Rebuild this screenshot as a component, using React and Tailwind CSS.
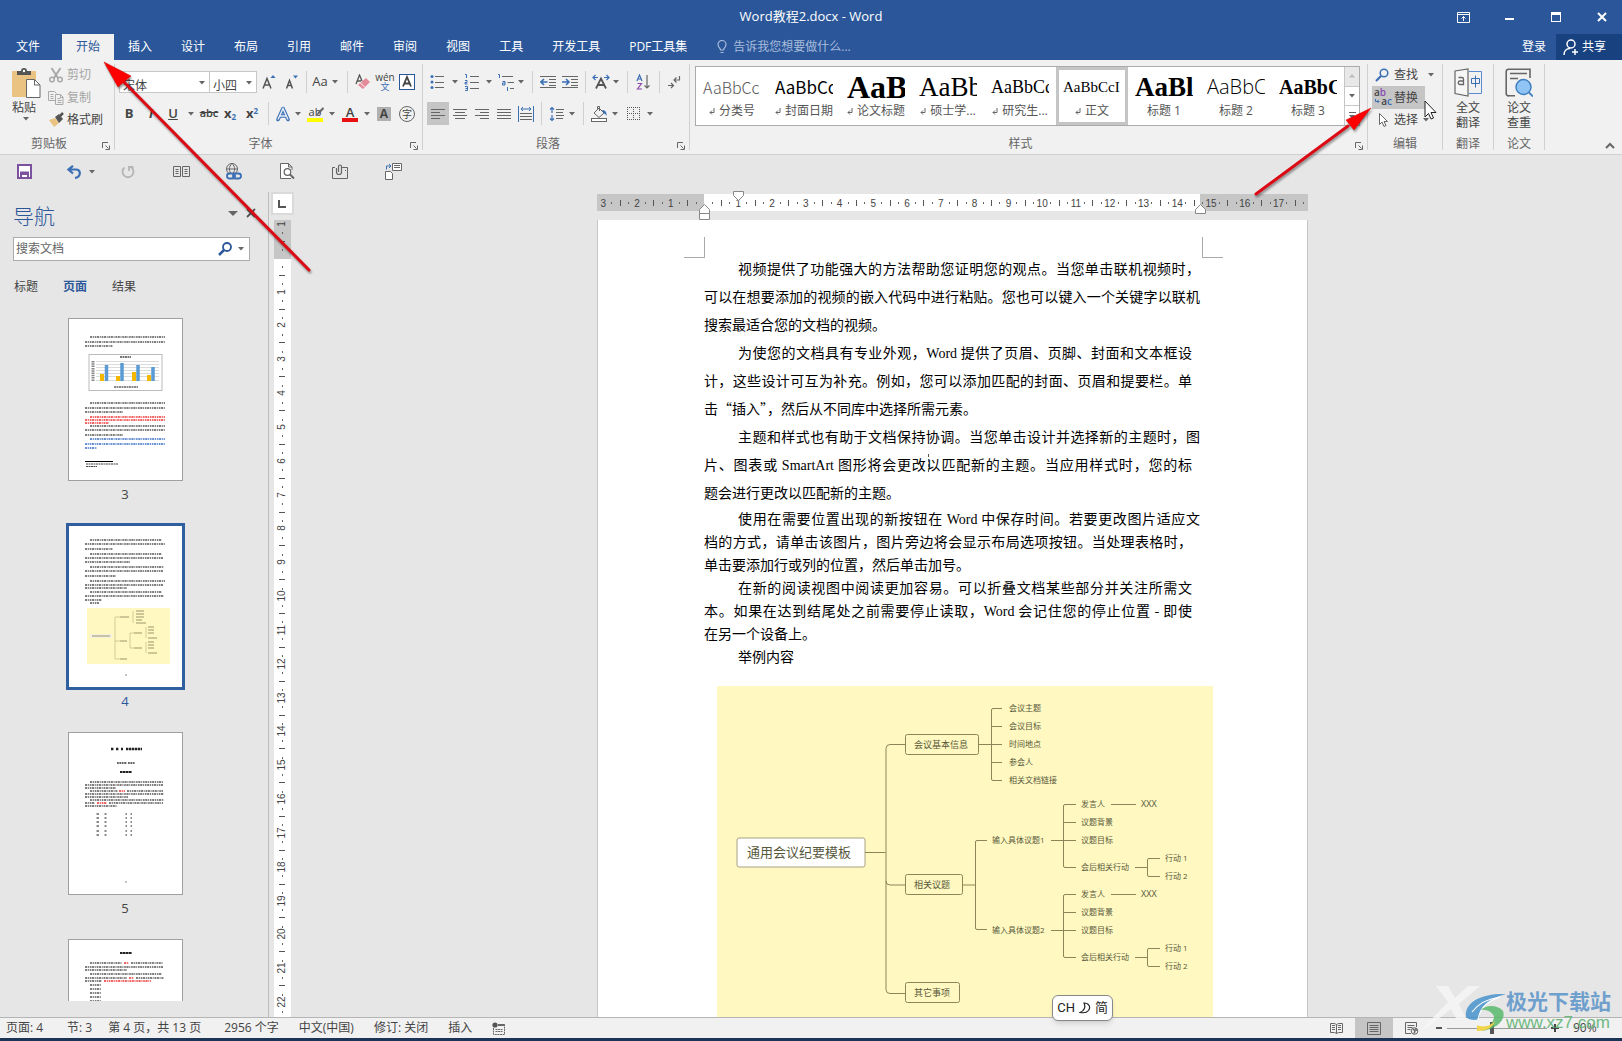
import React from "react";
import clsx from "clsx";

const tabs = [
  "插入",
  "设计",
  "布局",
  "引用",
  "邮件",
  "审阅",
  "视图",
  "工具",
  "开发工具",
  "PDF工具集",
];

const styles = [
  { sample: "AaBbCc", name: "分类号", mark: true, cls: "font-['Noto_Sans_CJK_SC'] font-light text-[16px] text-[#555]" },
  { sample: "AaBbCc", name: "封面日期", mark: true, cls: "font-['Noto_Sans_CJK_SC'] text-[17px] text-black" },
  { sample: "AaB", name: "论文标题", mark: true, cls: "font-['Liberation_Serif'] text-[32px] font-bold text-black" },
  { sample: "AaBb", name: "硕士学...", mark: true, cls: "font-['Liberation_Serif'] text-[27px] text-black" },
  { sample: "AaBbCc", name: "研究生...", mark: true, cls: "font-['Liberation_Serif'] text-[18px] text-black" },
  { sample: "AaBbCcI", name: "正文", mark: true, active: true, cls: "font-['Liberation_Serif'] text-[15px] text-black" },
  { sample: "AaBl", name: "标题 1", cls: "font-['Liberation_Serif'] text-[27px] font-bold text-black" },
  { sample: "AaBbC", name: "标题 2", cls: "font-['Open_Sans'] font-light text-[20px] text-black" },
  { sample: "AaBbC", name: "标题 3", cls: "font-['Liberation_Serif'] text-[20px] font-bold text-black" },
];

// kind: "full" and "short" are justified lines, "last" ends a paragraph
const looseLines = [
  { t: "视频提供了功能强大的方法帮助您证明您的观点。当您单击联机视频时，", kind: "full", first: true },
  { t: "可以在想要添加的视频的嵌入代码中进行粘贴。您也可以键入一个关键字以联机", kind: "full" },
  { t: "搜索最适合您的文档的视频。", kind: "last" },
  { t: "为使您的文档具有专业外观，Word 提供了页眉、页脚、封面和文本框设", kind: "short", first: true },
  { t: "计，这些设计可互为补充。例如，您可以添加匹配的封面、页眉和提要栏。单", kind: "short" },
  { t: "击“插入”，然后从不同库中选择所需元素。", kind: "last" },
  { t: "主题和样式也有助于文档保持协调。当您单击设计并选择新的主题时，图", kind: "full", first: true },
  { t: "片、图表或 SmartArt 图形将会更改以匹配新的主题。当应用样式时，您的标", kind: "short" },
  { t: "题会进行更改以匹配新的主题。", kind: "last" },
];

const tightLines = [
  { t: "使用在需要位置出现的新按钮在 Word 中保存时间。若要更改图片适应文", kind: "full", first: true },
  { t: "档的方式，请单击该图片，图片旁边将会显示布局选项按钮。当处理表格时，", kind: "short" },
  { t: "单击要添加行或列的位置，然后单击加号。", kind: "last" },
  { t: "在新的阅读视图中阅读更加容易。可以折叠文档某些部分并关注所需文", kind: "short", first: true },
  { t: "本。如果在达到结尾处之前需要停止读取，Word 会记住您的停止位置 - 即使", kind: "short" },
  { t: "在另一个设备上。", kind: "last" },
  { t: "举例内容", kind: "last", first: true },
];

const hRuler = [3, 2, 1, "", 1, 2, 3, 4, 5, 6, 7, 8, 9, 10, 11, 12, 13, 14, 15, 16, 17];
const vRuler = [1, "", 1, 2, 3, 4, 5, 6, 7, 8, 9, 10, 11, 12, 13, 14, 15, 16, 17, 18, 19, 20, 21, 22];

// page thumbnails: [x, y, width, color]
const K = "#555";
const R = "#e33";
const B = "#3a6fc4";

const thumb3 = [
  [22, 19, 75, K], [17, 24, 80, K], [17, 28, 28, K],
  [22, 85, 75, K], [17, 90, 80, K], [17, 94, 38, K],
  [22, 99, 75, R], [17, 102, 80, R], [17, 105, 24, R],
  [22, 108, 75, K], [17, 112, 80, K], [17, 117, 38, K],
  [22, 121, 75, B], [17, 126, 80, B], [17, 130, 12, B],
];
const thumb4 = [
  [22, 15, 72, K], [17, 19, 80, K], [17, 24, 28, K],
  [22, 29, 72, K], [17, 33, 78, K], [17, 37, 45, K],
  [22, 42, 74, K], [17, 46, 78, K], [17, 51, 31, K],
  [22, 56, 75, K], [17, 60, 78, K], [17, 63, 42, K],
  [22, 67, 72, K], [17, 71, 79, K], [17, 75, 17, K], [22, 78, 9, K],
];
const thumb5 = [
  [22, 50, 73, K], [17, 53, 78, K], [17, 56, 31, K],
  [22, 59, 28, K], [51, 59, 6, R], [59, 59, 36, K], [17, 62, 79, K], [17, 65, 43, K],
  [22, 68, 74, K], [17, 71, 10, K], [29, 71, 10, R], [41, 71, 54, K], [17, 74, 32, K],
];
const thumb6 = [
  [22, 24, 32, K], [56, 24, 5, R], [63, 24, 32, K], [17, 28, 78, K], [17, 31, 42, K],
  [22, 35, 72, K], [17, 39, 42, K], [61, 39, 5, R], [68, 39, 28, K],
  [17, 42, 17, K], [36, 42, 47, R],
  [22, 46, 11, K], [22, 50, 11, K], [22, 54, 11, K], [22, 58, 11, K], [22, 62, 11, K],
];

function Svg({ w, h, children, className }) {
  return (
    <svg
      width={w}
      height={h}
      viewBox={`0 0 ${w} ${h}`}
      fill="none"
      stroke="#666"
      className={clsx("shrink-0", className)}
      aria-hidden="true"
    >
      {children}
    </svg>
  );
}

function Tool({ label, className, children }) {
  return (
    <button aria-label={label} className={clsx("flex h-full shrink-0 items-center justify-center text-[#444]", className)}>
      {children}
    </button>
  );
}

function CaretIcon() {
  return (
    <Svg w={6} h={4}>
      <path d="M0 0h6L3 3.500z" fill="#666" stroke="none" />
    </Svg>
  );
}

function Caret({ className }) {
  return (
    <Tool label="更多选项" className={className}>
      <CaretIcon />
    </Tool>
  );
}

function Sep({ className }) {
  return (
    <div className={clsx("flex h-full shrink-0 justify-center", className)}>
      <div className="w-px bg-[#d0d0d0]" />
    </div>
  );
}

function Group({ title, className, launcher, children }) {
  return (
    <section className={clsx("relative flex flex-col justify-between border-r border-[#d0d0d0]", className)}>
      {children}
      <p className={clsx("text-center text-[12px] leading-[12px] text-[#666]", launcher && "pr-4")}>{title}</p>
      {launcher && (
        <button aria-label={title + "设置"} className="absolute right-1 bottom-0">
          <Svg w={8} h={8}>
            <path d="M.5 6V.5H6M3.500 3.500l3 3M7.500 3.500v4h-4" />
          </Svg>
        </button>
      )}
    </section>
  );
}

function Lines({ rows, w = 16 }) {
  return (
    <Svg w={w} h={14}>
      {rows.map(([x, len], i) => (
        <path key={i} d={`M${x} ${2.5 + i * 3}h${len}`} />
      ))}
    </Svg>
  );
}

function ClipboardGroup() {
  return (
    <Group title="剪贴板" className="w-[115px] shrink-0" launcher>
      <div className="flex">
        <button className="flex w-[48px] flex-col items-center pt-1 pl-1 text-[12px] leading-[18px] text-[#444]">
          <Svg w={29} h={30}>
            <rect x="0" y="3" width="24" height="26" rx="1" fill="#eac282" stroke="none" />
            <path d="M5 3h4a3 3 0 0 1 6 0h4v4H5z" fill="#555" stroke="none" />
            <circle cx="12" cy="3" r="1.200" fill="#fff" stroke="none" />
            <path d="M14.500 11.500h8l5.500 5.500v12.500H14.500z" fill="#fff" stroke="#666" />
            <path d="M22.500 11.500v5.500H28" />
          </Svg>
          <span className="pt-px pr-1">粘贴</span>
          <CaretIcon />
        </button>
        <div className="flex flex-col text-[12px] text-[#444]">
          <button className="flex h-[22px] items-center gap-[3px] text-[#a5a5a5]">
            <Svg w={16} h={16}>
              <g stroke="#a9a9a9" strokeWidth="1.500">
                <path d="M3.500 1l6.500 10M12.500 1L6 11" strokeWidth="2" />
                <circle cx="4" cy="12.500" r="2.300" />
                <circle cx="12" cy="12.500" r="2.300" />
              </g>
            </Svg>
            剪切
          </button>
          <button className="flex h-[23px] items-center gap-[3px] text-[#a5a5a5]">
            <Svg w={16} h={16}>
              <g stroke="#a9a9a9">
                <path d="M7 10.500H.5v-9h6l2 2M2.500 4.500h3M2.500 6.500h3M2.500 8.500h3" />
                <path d="M7.500 4.500h5l2.500 2.500v7.500H7.500zM12.500 4.500v3H15M9.500 8.500h3M9.500 10.500h4M9.500 12.500h4" />
              </g>
            </Svg>
            复制
          </button>
          <button className="flex h-[22px] items-center gap-[3px]">
            <Svg w={16} h={16}>
              <path d="M1 8l6-2 4 5-5 4z" fill="#eac282" stroke="none" />
              <path d="M7 5l4-3 4 5-4 4z" fill="#555" stroke="none" />
              <path d="M12 4l3-3" stroke="#555" strokeWidth="2.500" />
            </Svg>
            格式刷
          </button>
        </div>
      </div>
    </Group>
  );
}

function FontGroup() {
  return (
    <Group title="字体" className="w-[308px] shrink-0" launcher>
      <div className="flex flex-col gap-[9px] pt-[7px] pl-1">
        <div className="flex h-[22px]">
          <div className="relative w-[91px] border border-[#c6c6c6] bg-white">
            <select aria-label="字体" className="h-full w-full appearance-none pb-[3px] pl-[3px] text-[12px] text-[#444]">
              <option>宋体</option>
            </select>
            <div className="pointer-events-none absolute top-[9px] right-1">
              <CaretIcon />
            </div>
          </div>
          <div className="relative w-[47px] border border-l-0 border-[#c6c6c6] bg-white">
            <select aria-label="字号" className="h-full w-full appearance-none pb-[3px] pl-[3px] text-[12px] text-[#444]">
              <option>小四</option>
            </select>
            <div className="pointer-events-none absolute top-[9px] right-1">
              <CaretIcon />
            </div>
          </div>
          <Tool label="增大字号" className="w-6">
            <Svg w={14} h={16}>
              <path d="M1 14.500L5 4.500l4 10M2.500 11h5" stroke="#555" strokeWidth="1.500" />
              <path d="M8.500 4h5L11 1z" fill="#3a6fb4" stroke="none" />
            </Svg>
          </Tool>
          <Tool label="减小字号" className="w-[22px]">
            <Svg w={14} h={16}>
              <path d="M1.500 14.500l3-8 3 8M2.500 11.500h4" stroke="#555" strokeWidth="1.500" />
              <path d="M8 1.500h5l-2.500 3z" fill="#3a6fb4" stroke="none" />
            </Svg>
          </Tool>
          <Sep className="w-[6px]" />
          <Tool label="更改大小写" className="w-[22px] text-[13px]">Aa</Tool>
          <Caret className="w-2" />
          <Sep className="w-4" />
          <Tool label="清除格式" className="w-4">
            <Svg w={16} h={16}>
              <path d="M1 10l3.500-9 2.500 6M2 7h4" stroke="#555" strokeWidth="1.300" />
              <path d="M3 11l8-7 4 4-7 7z" fill="#e58a98" stroke="none" />
              <path d="M5.500 9l4 4" stroke="#fff" />
            </Svg>
          </Tool>
          <Tool label="拼音指南" className="w-7 flex-col text-[10px] leading-[10px]">
            <span>wén</span>
            <span className="text-[9px] text-[#3a6fb4]">文</span>
          </Tool>
          <Tool label="字符边框" className="w-4">
            <Svg w={16} h={16}>
              <rect x=".5" y=".5" width="15" height="15" fill="#fff" stroke="#2b579a" />
              <path d="M4 12.500l4-9.500 4 9.500M5.500 9.500h5" stroke="#444" strokeWidth="1.800" />
            </Svg>
          </Tool>
        </div>
        <div className="flex h-[23px] text-[13px]">
          <Tool label="加粗" className="w-5 font-bold">B</Tool>
          <Tool label="倾斜" className="w-6 font-bold italic">I</Tool>
          <Tool label="下划线" className="w-5 font-semibold underline">U</Tool>
          <Caret className="w-4" />
          <Tool label="删除线" className="w-5 text-[11px] font-semibold line-through">abc</Tool>
          <Tool label="下标" className="w-[22px] font-bold">
            <span>x<sub className="text-[8px] text-[#3a6fb4]">2</sub></span>
          </Tool>
          <Tool label="上标" className="w-[22px] font-bold">
            <span>x<sup className="text-[8px] text-[#3a6fb4]">2</sup></span>
          </Tool>
          <Sep className="w-[10px]" />
          <Tool label="文本效果" className="w-5">
            <Svg w={16} h={16}>
              <path d="M3 13.500L8 2.500l5 11M5 10h6" stroke="#3a6fb4" strokeWidth="3.600" strokeLinejoin="round" strokeLinecap="round" />
              <path d="M3 13.500L8 2.500l5 11M5 10h6" stroke="#e4edf8" strokeWidth="1.500" />
            </Svg>
          </Tool>
          <Caret className="w-[10px]" />
          <Tool label="突出显示颜色" className="w-6">
            <div className="flex flex-col items-center">
              <span className="relative text-[11px] leading-[12px]">
                ab
                <Svg w={9} h={10} className="absolute top-[1px] left-[6px]">
                  <path d="M1 9l2-4 5-5 1 2-5 5z" fill="#666" stroke="none" />
                </Svg>
              </span>
              <span className="h-1 w-4 bg-[#ffff00]" />
            </div>
          </Tool>
          <Caret className="w-[10px]" />
          <Tool label="字体颜色" className="w-[26px]">
            <div className="flex flex-col items-center">
              <span className="text-[13px] leading-[12px] font-semibold">A</span>
              <span className="h-1 w-4 bg-[#e81010]" />
            </div>
          </Tool>
          <Caret className="w-2" />
          <Tool label="字符底纹" className="w-[26px]">
            <span className="w-[14px] bg-[#b0b0b0] text-[12px] leading-[14px] font-bold">A</span>
          </Tool>
          <Tool label="带圈字符" className="w-5">
            <span className="size-[16px] rounded-full border border-[#666] text-[10px] leading-[14px]">字</span>
          </Tool>
        </div>
      </div>
    </Group>
  );
}

function ParagraphGroup() {
  return (
    <Group title="段落" className="w-[267px] shrink-0" launcher>
      <div className="flex flex-col gap-[9px] pt-[7px] pl-1">
        <div className="flex h-[22px]">
          <Tool label="项目符号" className="w-5">
            <Svg w={14} h={16}>
              <g fill="#3a6fb4" stroke="none">
                <circle cx="2" cy="2.500" r="1.500" />
                <circle cx="2" cy="8" r="1.500" />
                <circle cx="2" cy="13.500" r="1.500" />
              </g>
              <path d="M5 2.500h9M5 8.500h9M5 13.500h9" />
            </Svg>
          </Tool>
          <Caret className="w-4" />
          <Tool label="编号" className="w-[18px]">
            <Svg w={16} h={18}>
              <path d="M1 1.500h1.500V5M1 7.500h2v2H1v1.500h2.500M1 13.500h2.500v4H1M1.500 15.500h2" stroke="#3a6fb4" />
              <path d="M6 3.500h9M6 9.500h9M6 15.500h9" />
            </Svg>
          </Tool>
          <Caret className="w-4" />
          <Tool label="多级列表" className="w-[18px]">
            <Svg w={18} h={18}>
              <path d="M1 1.500h1.500V5M5.500 8.500h2.500V12H5.500v-2H8M10.500 14v4" stroke="#3a6fb4" />
              <path d="M5 3.500h11M10.500 9.500H17M13 15.500h4" />
            </Svg>
          </Tool>
          <Caret className="w-3" />
          <Sep className="w-[10px]" />
          <Tool label="减少缩进量" className="w-[22px]">
            <Svg w={16} h={14}>
              <path d="M0 1.500h16M9 4.500h7M9 7.500h7M9 10.500h7M0 12.500h16" />
              <path d="M7.500 7H1.500M4 4L1 7l3 3" stroke="#3a6fb4" strokeWidth="1.600" />
            </Svg>
          </Tool>
          <Tool label="增加缩进量" className="w-[22px]">
            <Svg w={16} h={14}>
              <path d="M0 1.500h16M9 4.500h7M9 7.500h7M9 10.500h7M0 12.500h16" />
              <path d="M0 7h6M4 4l3 3-3 3" stroke="#3a6fb4" strokeWidth="1.600" />
            </Svg>
          </Tool>
          <Sep className="w-2" />
          <Tool label="中文版式" className="w-6">
            <Svg w={18} h={16}>
              <path d="M4 14.500l5-10 5 10M6 11h6" stroke="#555" strokeWidth="1.800" />
              <path d="M6 3.500H1.500M3.500 1L1 3.500 3.500 6M12 3.500h4.500M14.500 1L17 3.500 14.500 6" stroke="#3a6fb4" strokeWidth="1.200" />
            </Svg>
          </Tool>
          <Caret className="w-[6px]" />
          <Sep className="w-4" />
          <Tool label="排序" className="w-4">
            <Svg w={14} h={16}>
              <path d="M1 7l2.500-6L6 7M2 5h3" stroke="#3a6fb4" strokeWidth="1.200" />
              <path d="M1.500 9.500h4l-4 5.500h4.500" stroke="#8a4bb0" strokeWidth="1.200" />
              <path d="M11 1v13M8.500 11.500L11 14l2.500-2.500" strokeWidth="1.200" />
            </Svg>
          </Tool>
          <Sep className="w-4" />
          <Tool label="显示编辑标记" className="w-4">
            <Svg w={14} h={14}>
              <path d="M11.500 1v4H6M8.500 2.500L6 5l2.500 2.500M0 10.500h5M3 8l2.500 2.500L3 13" strokeWidth="1.200" />
            </Svg>
          </Tool>
        </div>
        <div className="flex h-[23px]">
          <Tool label="左对齐" className="w-[22px] bg-[#c5c5c5]">
            <Lines rows={[[1, 14], [1, 9], [1, 14], [1, 9]]} />
          </Tool>
          <Tool label="居中" className="w-[22px]">
            <Lines rows={[[1, 14], [3, 10], [1, 14], [3, 10]]} />
          </Tool>
          <Tool label="右对齐" className="w-[22px]">
            <Lines rows={[[1, 14], [6, 9], [1, 14], [6, 9]]} />
          </Tool>
          <Tool label="两端对齐" className="w-[22px]">
            <Lines rows={[[1, 14], [1, 14], [1, 14], [1, 14]]} />
          </Tool>
          <Tool label="分散对齐" className="w-[22px]">
            <Svg w={16} h={16}>
              <path d="M.5 0v16M15.500 0v16M3 3h10M5 1L3 3l2 2M11 1l2 2-2 2" stroke="#3a6fb4" />
              <path d="M2 7.500h12M2 10.500h12M2 13.500h12" />
            </Svg>
          </Tool>
          <Sep className="w-2" />
          <Tool label="行距" className="w-6">
            <Svg w={16} h={16}>
              <path d="M3 1.500V7M1 3.500l2-2 2 2M3 9v5.500M1 12.500l2 2 2-2" stroke="#3a6fb4" strokeWidth="1.200" />
              <path d="M7 3.500h8M7 6.500h7M7 9.500h8M7 12.500h7" />
            </Svg>
          </Tool>
          <Caret className="w-[6px]" />
          <Sep className="w-4" />
          <Tool label="底纹" className="w-4">
            <Svg w={17} h={16}>
              <path d="M3 7l5-5 5 5-5 4.500zM6.500 4V.5h2V5" />
              <path d="M11 4c3 0 5 2 4.500 6-1-2-2-2.500-3-3z" fill="#3a6fb4" stroke="none" />
              <rect x=".5" y="12.500" width="15" height="3" fill="#fff" />
            </Svg>
          </Tool>
          <Caret className="w-4" />
          <Tool label="边框" className="w-5">
            <Svg w={13} h={13}>
              <path
                d="M0 .5h13M0 6.500h13M0 12.500h13M.5 0v13M6.500 0v13M12.500 0v13"
                stroke="#555"
                strokeDasharray="1 1"
                shapeRendering="crispEdges"
              />
            </Svg>
          </Tool>
          <Caret className="w-[14px]" />
        </div>
      </div>
    </Group>
  );
}

function StylesGroup() {
  return (
    <Group title="样式" className="min-w-0 flex-1" launcher>
      <div className="pt-[2px] pr-[7px] pl-[5px]">
        <div className="flex h-[60px] border border-[#ababab] bg-white">
          <div className="flex min-w-0 flex-1 overflow-hidden">
            {styles.map((s) => (
              <button
                key={s.name}
                className={clsx(
                  "flex w-[72px] shrink-0 flex-col items-center border-[3px] px-1 pt-[3px]",
                  s.active ? "border-[#c5c5c5]" : "border-transparent"
                )}
              >
                <span className={clsx("h-[28px] w-full overflow-hidden text-left leading-[28px] whitespace-nowrap", s.cls)}>
                  {s.sample}
                </span>
                <span className="flex items-center gap-1 text-[12px] leading-[20px] whitespace-nowrap text-[#555]">
                  {s.mark && (
                    <Svg w={6} h={7}>
                      <path d="M5 0v4.500H1M3 2.500l-2 2 2 2" />
                    </Svg>
                  )}
                  {s.name}
                </span>
              </button>
            ))}
          </div>
          <div className="flex w-[15px] flex-col divide-y divide-[#c6c6c6] border-l border-[#c6c6c6]">
            <button aria-label="上一行" className="flex flex-1 items-center justify-center bg-[#e8e8e8]">
              <Svg w={6} h={4}>
                <path d="M0 3.500h6L3 0z" fill="#bbb" stroke="none" />
              </Svg>
            </button>
            <button aria-label="下一行" className="flex flex-1 items-center justify-center">
              <CaretIcon />
            </button>
            <button aria-label="其他样式" className="flex flex-1 flex-col items-center justify-center gap-[2px]">
              <span className="h-px w-[7px] bg-[#666]" />
              <CaretIcon />
            </button>
          </div>
        </div>
      </div>
    </Group>
  );
}

function EditGroups() {
  return (
    <>
      <Group title="编辑" className="w-[75px] shrink-0">
        <div className="flex flex-col items-start pl-1 text-[12px] text-[#444]">
          <div className="flex h-[22px] items-center">
            <button className="flex items-center gap-[2px] pr-[7px]">
              <Svg w={20} h={14}>
                <circle cx="12" cy="5" r="3.800" stroke="#3a6fb4" strokeWidth="1.500" />
                <path d="M9 8l-5 5" stroke="#3a6fb4" strokeWidth="2.200" />
              </Svg>
              查找
            </button>
            <Caret className="w-3" />
          </div>
          <button className="flex h-[23px] items-center gap-[2px] bg-[#c5c5c5] pr-[7px]">
            <span className="relative flex w-5 flex-col items-end pb-[2px] text-[10px] leading-[9px] font-semibold">
              <span className="self-start pl-[2px]">a<span className="text-[#8a4bb0]">b</span></span>
              <span>a<span className="text-[#3a6fb4]">c</span></span>
              <Svg w={5} h={5} className="absolute bottom-1 left-[3px]">
                <path d="M.5 0v2.500H4M2.500 1L4 2.500 2.500 4" stroke="#3a6fb4" />
              </Svg>
            </span>
            替换
          </button>
          <div className="flex h-[22px] items-center">
            <button className="flex items-center gap-[2px] pr-[2px]">
              <Svg w={20} h={16}>
                <path d="M7.500 1.500v11l2.500-2.500 2 4.500 2-1-2-4h3.500z" fill="#fff" />
              </Svg>
              选择
            </button>
            <Caret className="w-3" />
          </div>
        </div>
      </Group>
      <Group title="翻译" className="w-[51px] shrink-0">
        <button className="flex flex-col items-center gap-[3px] pt-1 text-[12px] leading-[15px] text-[#444]">
          <Svg w={28} h={29}>
            <path d="M1 3l13-2v27L1 25.500z" fill="#f6f6f6" strokeWidth="1.200" />
            <path d="M4.500 9.500h3.500a1.500 1.500 0 0 1 1.500 1.500v5.500H6a1.700 1.700 0 0 1 0-3.500h3.500" strokeWidth="1.300" />
            <path d="M15 3.500h12.500v22H15" stroke="#5a8ad0" />
            <path d="M17.500 10.500h8v5h-8zM21.500 7.500v12" stroke="#3a6fb4" />
          </Svg>
          <span>全文<br />翻译</span>
        </button>
      </Group>
      <Group title="论文" className="w-[51px] shrink-0">
        <button className="flex flex-col items-center gap-[3px] pt-1 text-[12px] leading-[15px] text-[#444]">
          <Svg w={28} h={29}>
            <path d="M10 27.800H4A2.500 2.500 0 0 1 1.200 25V3.500A2.500 2.500 0 0 1 3.500 1.200H25V10" strokeWidth="1.600" />
            <path d="M5 5.500h17M5 10.500h8" strokeWidth="1.600" />
            <circle cx="18.500" cy="19" r="7.500" fill="#90c4f4" stroke="#3f7fc0" strokeWidth="1.500" />
            <path d="M24 24.500l4 4" stroke="#3f7fc0" strokeWidth="1.800" />
          </Svg>
          <span>论文<br />查重</span>
        </button>
      </Group>
      <div className="flex w-[77px] shrink-0 items-end justify-end pr-[7px]">
        <button aria-label="折叠功能区" className="pb-px">
          <Svg w={10} h={7}>
            <path d="M1 6l4-4 4 4" strokeWidth="2" />
          </Svg>
        </button>
      </div>
    </>
  );
}

function Header() {
  return (
    <header className="bg-[#2b579a] text-[12px] text-white">
      <div className="relative flex h-[34px] items-center justify-end">
        <h1 className="absolute inset-x-0 text-center text-[13px]">Word教程2.docx - Word</h1>
        <div className="relative flex items-center">
          <button aria-label="功能区显示选项" className="flex w-[50px] justify-center">
            <Svg w={13} h={11}>
              <path d="M.5.5h12v10H.5zM0 2.500h13M6.500 9V4.500M4.500 6.500l2-2 2 2" stroke="#fff" />
            </Svg>
          </button>
          <button aria-label="最小化" className="flex h-[11px] w-[42px] items-center justify-center pt-1">
            <span className="h-[2px] w-[9px] bg-white" />
          </button>
          <button aria-label="最大化" className="flex w-[52px] justify-center">
            <span className="h-[10px] w-[10px] border border-t-[3px] border-white" />
          </button>
          <button aria-label="关闭" className="flex w-[40px] justify-center">
            <Svg w={10} h={10}>
              <path d="M1 1l8 8M9 1L1 9" stroke="#fff" strokeWidth="2" />
            </Svg>
          </button>
        </div>
      </div>
      <nav className="flex h-[26px]">
        <button className="mr-[6px] w-[56px]">文件</button>
        <button className="bg-[#f1f1f1] px-[14px] text-[#2b579a]">开始</button>
        <div className="flex gap-px">
          {tabs.map((t) => (
            <button key={t} className="px-[14px] whitespace-nowrap">{t}</button>
          ))}
        </div>
        <label className="ml-4 flex flex-1 items-center gap-[6px]">
          <Svg w={10} h={14}>
            <path d="M3.500 10C3.500 8 1 7.500 1 4.500a4 4 0 0 1 8 0C9 7.500 6.500 8 6.500 10zM3.500 12.500h3" stroke="#a9bcdc" strokeWidth="1.200" />
          </Svg>
          <input
            aria-label="告诉我您想要做什么"
            placeholder="告诉我您想要做什么..."
            className="w-[160px] outline-none placeholder:text-[#a9bcdc]"
          />
        </label>
        <button className="px-[10px]">登录</button>
        <button className="flex w-[66px] items-center gap-1 bg-[#17427f] pl-[7px]">
          <Svg w={15} h={17}>
            <circle cx="8" cy="5" r="4" stroke="#fff" strokeWidth="1.500" />
            <path d="M1 16c0-4 2.500-6.500 6-6.500M12 10v6M9 13h6" stroke="#fff" strokeWidth="1.500" />
          </Svg>
          共享
        </button>
      </nav>
    </header>
  );
}

function QuickAccess() {
  return (
    <div className="flex h-[35px] shrink-0 items-center pb-[2px]">
      <Tool label="保存" className="w-12">
        <Svg w={15} h={15}>
          <path d="M1 1h13v13H1z" fill="#fff" stroke="#7c529f" strokeWidth="2" />
          <path d="M3 8.500h9M4 14v-4h7v4" stroke="#7c529f" strokeWidth="2" />
        </Svg>
      </Tool>
      <Tool label="撤消" className="w-[52px]">
        <Svg w={15} h={14}>
          <path d="M2 4.500h7c5 0 5.500 7-1 8.500M6 .8L1.500 4.500 6 8.500" stroke="#3a6fb4" strokeWidth="2.200" />
        </Svg>
      </Tool>
      <Caret className="-ml-[14px] w-3" />
      <Tool label="恢复" className="w-[60px]">
        <Svg w={14} h={14}>
          <path d="M3.500 2.500a5.500 5.500 0 1 0 7 0M8 6V2h4.500" stroke="#b5b5b5" strokeWidth="1.800" />
        </Svg>
      </Tool>
      <Tool label="并排查看" className="w-[46px]">
        <Svg w={17} h={11}>
          <path d="M.5.5h7v10h-7zM9.500.5h7v10h-7zM2.500 3.500h3M2.500 5.500h3M2.500 7.500h3M11.500 3.500h3M11.500 5.500h3M11.500 7.500h3" />
        </Svg>
      </Tool>
      <Tool label="超链接" className="w-[58px]">
        <Svg w={17} h={17}>
          <circle cx="7" cy="6" r="5.500" />
          <path d="M1.500 6h11M7 .5c-3.500 3-3.500 8 0 11M7 .5c3.500 3 3.500 8 0 11" />
          <rect x="2" y="10.500" width="8" height="5" rx="2.500" fill="#e6e6e6" stroke="#3a6fb4" strokeWidth="1.800" />
          <rect x="8" y="10.500" width="8" height="5" rx="2.500" stroke="#3a6fb4" strokeWidth="1.800" />
        </Svg>
      </Tool>
      <Tool label="打印预览" className="w-[50px]">
        <Svg w={15} h={17}>
          <path d="M11 15.500H.5V.5h8l3.500 3.500v3M8.500.5V4H12" fill="#fff" />
          <circle cx="7.500" cy="9" r="3.300" fill="#fff" strokeWidth="1.300" />
          <path d="M10 11.500l4 4" strokeWidth="2" />
        </Svg>
      </Tool>
      <Tool label="附件" className="w-[56px]">
        <Svg w={17} h={16}>
          <path d="M3 3.500H.5v11h15v-11H10M13 6.500h1" />
          <path d="M4.500 4v4a2.500 2.500 0 0 0 5 0V2.500a1.500 1.500 0 0 0-3 0V8" strokeWidth="1.200" />
        </Svg>
      </Tool>
      <Tool label="切换窗口" className="w-[50px]">
        <Svg w={17} h={17}>
          <path d="M7.500.5h9v7h-9zM9 2.500h6M9 4.500h6M.5 8.500h5l2 2v6h-7z" fill="#fff" />
          <path d="M1.500 6.500V3h4M4 1l2 2-2 2" stroke="#3a6fb4" />
        </Svg>
      </Tool>
    </div>
  );
}

function ThumbLines({ lines }) {
  return lines.map(([x, y, w, color], i) => (
    <path key={i} d={`M${x} ${y}h${w}`} stroke={color} strokeWidth="1.500" strokeDasharray="2.200 .7 1 .8 1.600 .6" />
  ));
}

function Thumb({ no, selected, children }) {
  return (
    <button className="flex h-[207px] shrink-0 flex-col items-center gap-1">
      <div
        className={clsx(
          "h-[163px] w-[115px] shrink-0 overflow-hidden border bg-white",
          selected ? "border-[#2f5f9e] outline-2 outline-[#2f5f9e]" : "border-[#a0a0a0]"
        )}
      >
        <svg width="113" height="161" viewBox="1 1 113 161" fill="none" aria-hidden="true">
          {children}
        </svg>
      </div>
      <span className={clsx("text-[13px] leading-[18px]", selected ? "text-[#2b579a]" : "text-[#444]")}>{no}</span>
    </button>
  );
}

function NavPane() {
  return (
    <aside className="mt-[2px] flex w-[269px] shrink-0 flex-col border-r border-[#bcbcbc] pb-4">
      <div className="flex h-[45px] shrink-0 items-center pl-[13px]">
        <h2 className="flex-1 pt-1 text-[21px] font-light text-[#2b579a]">导航</h2>
        <button aria-label="任务窗格选项" className="mb-px w-[18px]">
          <Svg w={10} h={6}>
            <path d="M0 0h10L5 5z" fill="#666" stroke="none" />
          </Svg>
        </button>
        <button aria-label="关闭" className="mr-3 mb-1">
          <Svg w={10} h={10}>
            <path d="M1 1l8 8M9 1L1 9" stroke="#555" strokeWidth="1.800" />
          </Svg>
        </button>
      </div>
      <div className="mx-[13px] flex h-[24px] w-[237px] shrink-0 items-center border border-[#ababab] bg-white">
        <input
          aria-label="搜索文档"
          placeholder="搜索文档"
          className="min-w-0 flex-1 pl-[2px] text-[12px] outline-none placeholder:text-[#666]"
        />
        <button aria-label="搜索">
          <Svg w={15} h={14}>
            <circle cx="9" cy="5" r="4" stroke="#2b579a" strokeWidth="1.800" />
            <path d="M6 8l-5 5" stroke="#2b579a" strokeWidth="2.500" />
          </Svg>
        </button>
        <Caret className="w-4" />
      </div>
      <div className="flex h-[52px] shrink-0 items-center gap-[25px] pl-[14px] text-[12px] text-[#444]">
        <button>标题</button>
        <button className="font-bold text-[#2b579a]">页面</button>
        <button>结果</button>
      </div>
      <div className="flex min-h-0 flex-1 flex-col items-center overflow-hidden pt-[5px] pr-[18px]">
        <Thumb no={3}>
          <ThumbLines lines={thumb3} />
          <rect x="21" y="36.500" width="73" height="36" stroke="#bbb" />
          <path d="M52 39h11" stroke="#777" strokeWidth="2" strokeDasharray="2 .5" />
          <path d="M28 43.500h63M28 46.500h63M28 49.500h63M28 52.500h63M28 55.500h63M28 58.500h63M28 62.500h63" stroke="#ccc" strokeWidth=".7" />
          <path d="M25 43v20" stroke="#888" strokeWidth="3" strokeDasharray="1.500 .8" />
          <path d="M34 56v7M50 58v5M66 54v9M81 57v6" stroke="#f5b800" strokeWidth="4" />
          <path d="M38.500 47v16M54 45v18M70 47v16M85 49v14" stroke="#5b9bd5" strokeWidth="3.500" />
          <path d="M46 69h24" stroke="#666" strokeWidth="1.500" strokeDasharray="2 .5" />
          <path d="M17 143.500h28" stroke="#000" />
          <path d="M18 146h32M18 148.500h11" stroke="#444" strokeDasharray="2 .5" />
        </Thumb>
        <Thumb no={4} selected>
          <ThumbLines lines={thumb4} />
          <rect x="19" y="83" width="83" height="56" fill="#fff8c0" />
          <rect x="22" y="109" width="22" height="4" fill="#f4f0e0" />
          <path d="M24 111h18M52 92h9M52 116h7M52 134h7M68 86h8M68 89h8M68 92h8M68 95h6M68 98h10M80 102h6M80 105h6M80 108h6M80 113h9M80 117h6M80 120h6M80 123h6M80 128h9M66 108h8M66 123h8" stroke="#9a956a" />
          <path d="M52 92h-5v42h5M47 116h5M65 86v12M66 108h-4v15h4M78 102v11M78 117v11" stroke="#b5af80" strokeWidth=".6" />
          <path d="M57 150h2" stroke="#888" />
        </Thumb>
        <Thumb no={5}>
          <path d="M43 17h3M48 17h3M53 17h2M58 17h16" stroke="#222" strokeWidth="2.600" strokeDasharray="2.400 .6" />
          <path d="M49 31h10M60 31h7" stroke="#666" strokeWidth="1.800" strokeDasharray="1.800 .6" />
          <path d="M52 40h12" stroke="#222" strokeWidth="2" strokeDasharray="2.500 .4" />
          <ThumbLines lines={thumb5} />
          {[82, 86, 90, 94, 99, 103].map((y) => (
            <path key={y} d={`M28.500 ${y}h2.500M36.500 ${y}h2M57.500 ${y}h1.500M62.500 ${y}h1.500`} stroke="#666" strokeWidth="1.600" />
          ))}
          <path d="M57 150h2" stroke="#888" />
        </Thumb>
        <Thumb no={6}>
          <path d="M52 14h12" stroke="#222" strokeWidth="2" strokeDasharray="2.500 .4" />
          <ThumbLines lines={thumb6} />
        </Thumb>
      </div>
    </aside>
  );
}

function VerticalRuler() {
  return (
    <div className="flex w-[26px] shrink-0 flex-col items-center overflow-hidden pt-[2px]">
      <button aria-label="制表符" className="flex h-[23px] w-[23px] shrink-0 items-center justify-center border-2 border-[#dadada] bg-white">
        <Svg w={8} h={8}>
          <path d="M1 0v7h7" stroke="#555" strokeWidth="2" />
        </Svg>
      </button>
      <div className="mt-[5px] h-[812px] w-[17px] shrink-0 bg-[linear-gradient(#c6c6c6_39px,#fff_39px)]">
        <div className="flex h-full flex-col">
          {vRuler.map((n, i) => (
            <div
              key={i}
              className="grid min-h-0 flex-1 grid-rows-4 justify-items-center font-['Liberation_Sans'] text-[10px] leading-none text-[#444]"
            >
              <span className="flex h-[8px] w-[14px] -rotate-90 items-center justify-center">{n}</span>
              <span className="mt-1 h-[2px] w-px bg-[#666]" />
              <span className="mt-1 h-px w-[6px] bg-[#555]" />
              <span className="mt-1 h-[2px] w-px bg-[#666]" />
            </div>
          ))}
        </div>
      </div>
    </div>
  );
}

function HorizontalRuler() {
  return (
    <div className="relative h-[17px] w-[711px] shrink-0 bg-[linear-gradient(90deg,#c6c6c6_107px,#fff_107px,#fff_603px,#c6c6c6_603px)]">
      <div className="flex h-full pl-[2px]">
        {hRuler.map((n, i) => (
          <div
            key={i}
            className="grid min-w-0 flex-1 grid-cols-4 items-center justify-items-center font-['Liberation_Sans'] text-[10px] text-[#444]"
          >
            <span className="flex w-2 justify-center pt-px">{n}</span>
            <span className="h-[2px] w-px bg-[#666]" />
            <span className="h-[6px] w-px bg-[#555]" />
            <span className="h-[2px] w-px bg-[#666]" />
          </div>
        ))}
      </div>
      <Svg w={11} h={10} className="absolute -top-[3px] left-[136px]">
        <path d="M.5.5h10v4l-5 5-5-5z" fill="#fff" stroke="#888" />
      </Svg>
      <Svg w={11} h={16} className="absolute top-[10px] left-[102px]">
        <path d="M5.500.5l5 5v10H.5v-10zM.5 9.500h10" fill="#fff" stroke="#888" />
      </Svg>
      <Svg w={11} h={10} className="absolute top-[10px] left-[598px]">
        <path d="M5.500.5l5 5v4H.5v-4z" fill="#fff" stroke="#888" />
      </Svg>
    </div>
  );
}

function DocLine({ line, className }) {
  return (
    <p
      className={clsx(
        "whitespace-nowrap",
        line.first && "indent-[34px]",
        line.kind === "full" && "w-[496px] [text-align-last:justify]",
        line.kind === "short" && "w-[488px] [text-align-last:justify]",
        className
      )}
    >
      {line.t.split(/([A-Za-z]+)/).map((part, i) =>
        i % 2 ? (
          <span key={i} className="font-['Liberation_Serif'] leading-none">{part}</span>
        ) : (
          part
        )
      )}
    </p>
  );
}

// [x, y, text, size]
const mapLabels = [
  [37, 178, "通用会议纪要模板", 13],
  [204, 69, "会议基本信息", 9],
  [204, 209, "相关议题", 9],
  [204, 317, "其它事项", 9],
  [299, 32, "会议主题", 8],
  [299, 50, "会议目标", 8],
  [299, 68, "时间地点", 8],
  [299, 86, "参会人", 8],
  [299, 104, "相关文档链接", 8],
  [282, 164, "输入具体议题1", 8],
  [282, 254, "输入具体议题2", 8],
  [371, 128, "发言人", 8],
  [431, 128, "XXX", 9],
  [371, 146, "议题背景", 8],
  [371, 164, "议题目标", 8],
  [371, 191, "会后相关行动", 8],
  [455, 182, "行动 1", 8],
  [455, 200, "行动 2", 8],
  [371, 218, "发言人", 8],
  [431, 218, "XXX", 9],
  [371, 236, "议题背景", 8],
  [371, 254, "议题目标", 8],
  [371, 281, "会后相关行动", 8],
  [455, 272, "行动 1", 8],
  [455, 290, "行动 2", 8],
];

function MindMap() {
  return (
    <svg
      width="496"
      height="331"
      viewBox="7 7 496 331"
      className="mt-[18px] ml-[13px] bg-[#fff8c0] font-['Open_Sans','Noto_Sans_CJK_SC']"
      fill="none"
      stroke="#8d8458"
      role="img"
      aria-label="通用会议纪要模板"
    >
      <rect x="27" y="159" width="128" height="29" rx="2" fill="#fff" stroke="#a9a284" />
      <rect x="195.500" y="55.500" width="73" height="20" rx="2" />
      <rect x="195.500" y="195.500" width="57" height="20" rx="2" />
      <rect x="195.500" y="303.500" width="54" height="20" rx="2" />
      <path d="M155 173.500h20.500M195 65.500h-15a4 4 0 0 0-4 4v241a4 4 0 0 0 4 4h15M176 202a4 4 0 0 0 4 4h15" />
      <path d="M268 65.500h24M292 29.500h-9q-1.500 0-1.500 1.500v69q0 1.500 1.500 1.500h9M281.500 47.500H292M281.500 83.500H292" />
      <path d="M252 206h13.500M277 161.500h-10q-1.500 0-1.500 1.500v86q0 1.500 1.500 1.500h10" />
      {[0, 90].map((dy) => (
        <path
          key={dy}
          transform={`translate(0 ${dy})`}
          d="M341 161.500h25M366 125.500h-11q-1.500 0-1.500 1.500v60q0 1.500 1.500 1.500h11M353.500 143.500H366M401 125.500h25M425 188.500h12.500M450 179.500h-11q-1.500 0-1.500 1.500v15q0 1.500 1.500 1.500h11"
        />
      ))}
      <g fill="#57583c" stroke="none">
        {mapLabels.map(([x, y, t, size]) => (
          <text key={x + "-" + y} x={x} y={y} fontSize={size}>{t}</text>
        ))}
      </g>
    </svg>
  );
}

function DocumentArea() {
  return (
    <main className="flex min-w-0 flex-1 flex-col items-center overflow-hidden pt-1 pr-3">
      <HorizontalRuler />
      <article className="relative mt-[9px] w-[711px] flex-1 overflow-hidden border-x border-[#c6c6c6] bg-white pt-[34px] pl-[106px] font-['Noto_Sans_CJK_SC'] text-[14px] text-black">
        <div className="absolute top-[17px] left-[86px] size-[21px] border-r border-b border-[#aaa]" />
        <div className="absolute top-[17px] left-[604px] size-[21px] border-b border-l border-[#aaa]" />
        {looseLines.map((l, i) => (
          <DocLine key={i} line={l} className="leading-[28px]" />
        ))}
        <div className="mt-px">
          {tightLines.map((l, i) => (
            <DocLine key={i} line={l} className="leading-[23px]" />
          ))}
        </div>
        <MindMap />
        <div className="absolute top-[234px] left-[330px] h-[18px] border-l border-dashed border-[#555]" />
      </article>
    </main>
  );
}

function StatusBar() {
  return (
    <footer className="flex h-[24px] shrink-0 items-center justify-between border-t border-b-[3px] border-t-[#b5b5b5] border-b-[#1c3557] bg-[#f1f1f1] pl-[6px] text-[12px] text-[#444]">
      <div className="flex items-center gap-5 whitespace-nowrap">
        <span className="w-[41px]">页面: 4</span>
        <div className="flex gap-4 pr-[3px]">
          <span>节: 3</span>
          <span>第 4 页，共 13 页</span>
        </div>
        <span>2956 个字</span>
        <span>中文(中国)</span>
        <span>修订: 关闭</span>
        <span>插入</span>
        <Svg w={13} h={13}>
          <path d="M1.500 6v6.500h11V2.500H6M3.500 7.500h7M3.500 9.500h7" strokeDasharray="2 .6" />
          <circle cx="3" cy="3" r="2.600" fill="#555" stroke="none" />
          <path d="M6 3h6.500" strokeWidth="2" />
        </Svg>
      </div>
      <div className="flex h-full items-center">
        <Tool label="阅读视图" className="w-[38px]">
          <Svg w={13} h={12}>
            <path d="M.5 1.500h4l2 1 2-1h4v9h-4l-2 1-2-1h-4zM6.500 2.500v9M2 3.500h3M2 5.500h3M2 7.500h3M8 3.500h3M8 5.500h3M8 7.500h3" />
          </Svg>
        </Tool>
        <Tool label="页面视图" className="w-[38px] bg-[#c5c5c5]">
          <Svg w={14} h={13}>
            <path d="M.5.5h13v12H.5zM2.500 3.500h9M2.500 5.500h9M2.500 7.500h9M2.500 9.500h9" />
          </Svg>
        </Tool>
        <Tool label="Web 版式视图" className="w-[38px]">
          <Svg w={14} h={13}>
            <path d="M6 11.500H.5V.5h11V5M2.500 3.500h7M2.500 5.500h5M2.500 7.500h3" />
            <circle cx="9.500" cy="9" r="3.300" fill="#f1f1f1" />
            <path d="M8 7l2 2-1 2.500M10 6.500l2 2" strokeWidth="1.500" />
          </Svg>
        </Tool>
        <Tool label="缩小" className="w-4">
          <span className="h-[2px] w-[6px] bg-[#555]" />
        </Tool>
        <input
          type="range"
          aria-label="缩放"
          min="10"
          max="190"
          defaultValue="90"
          className="h-[12px] w-[100px] appearance-none bg-[linear-gradient(#999,#999)] bg-[length:100%_1px] bg-center bg-no-repeat [&::-webkit-slider-thumb]:h-[12px] [&::-webkit-slider-thumb]:w-1 [&::-webkit-slider-thumb]:appearance-none [&::-webkit-slider-thumb]:bg-[#555]"
        />
        <Tool label="放大" className="w-4">
          <Svg w={8} h={8}>
            <path d="M0 4h8M4 0v8" stroke="#444" strokeWidth="2" />
          </Svg>
        </Tool>
        <span className="w-[59px] pl-[10px]">90%</span>
      </div>
    </footer>
  );
}

function Overlays() {
  return (
    <div className="pointer-events-none absolute inset-0 overflow-hidden">
      {/* callout arrow to the 开始 tab */}
      <Svg w={320} h={290} className="absolute top-0 left-0 drop-shadow-[1px_2px_1px_rgba(0,0,0,0.4)]">
        <path d="M122 80l187 190" stroke="#dc0a14" strokeWidth="3" strokeLinecap="round" />
        <path d="M104 62l27 14-13 11z" fill="#f00" stroke="#c00" strokeWidth=".5" />
      </Svg>
      {/* callout arrow to 替换 */}
      <Svg w={130} h={100} className="absolute top-[100px] right-[245px] drop-shadow-[1px_2px_1px_rgba(0,0,0,0.4)]">
        <path d="M9 94l92-68" stroke="#dc0a14" strokeWidth="3" strokeLinecap="round" />
        <path d="M124 8L99 20l8 10z" fill="#f00" stroke="#c00" strokeWidth=".5" />
      </Svg>
      <Svg w={13} h={20} className="absolute top-[100px] right-[185px]">
        <path d="M1 1v16l3.500-3.500 2.500 5.500 2.500-1-2.500-5.500h5z" fill="#fff" stroke="#222" />
      </Svg>
      <div className="absolute right-[509px] bottom-[20px] flex h-[26px] items-center gap-1 rounded-md border border-[#888] bg-white px-1 font-['Roboto','Noto_Sans_CJK_SC'] text-[13px] text-[#222] shadow-md">
        CH
        <Svg w={12} h={12}>
          <path d="M5 1c5 0 7 4 4.500 7.500C8 10.500 4 11 1 10.500 5 9 7 5 5 1z" stroke="#222" strokeWidth="1.200" />
        </Svg>
        简
      </div>
      <div className="absolute right-[11px] bottom-0 flex items-center">
        <Svg w={75} h={52} className="-mr-8 mb-2">
          <path d="M15 5h12l7 12L47 5h12L38 23l8 16H36l-6-11L6 47 0 49l27-28z" fill="#f6f6f6" stroke="none" opacity=".8" />
        </Svg>
        <Svg w={42} h={42} className="relative">
          <path d="M2 27C0 12 18 3 42 4 26 8 16 16 15 29c-5 2-10 1-13-2z" fill="#3d8fca" stroke="none" opacity=".8" />
          <path d="M8 22C14 14 22 9 36 7 22 12 16 18 14 30" stroke="#fff" strokeWidth="1.200" />
          <path d="M17 20c5-6 17-5 22 1 3 8-5 18-22 20 8-3 13-9 13-15-3-5-8-7-13-6z" fill="#57b86b" stroke="none" opacity=".85" />
          <path d="M13 35c6 3 14 1 18-4-1 5-7 10-18 10z" fill="#f2d44a" stroke="none" />
        </Svg>
        <div className="flex flex-col">
          <span className="text-[21px] leading-[23px] font-bold text-[#6f9fcc]">极光下载站</span>
          <span className="font-['Liberation_Sans'] text-[17px] leading-[19px] text-[#6fb981]">www.xz7.com</span>
        </div>
      </div>
    </div>
  );
}

export default function App() {
  return (
    <div className="relative flex h-screen flex-col overflow-hidden bg-[#e6e6e6] font-['Open_Sans','Noto_Sans_CJK_SC',sans-serif]">
      <Header />
      <div className="flex h-[95px] shrink-0 border-b border-[#cfcfcf] bg-[#f1f1f1] py-1">
        <ClipboardGroup />
        <FontGroup />
        <ParagraphGroup />
        <StylesGroup />
        <EditGroups />
      </div>
      <QuickAccess />
      <div className="flex min-h-0 flex-1">
        <NavPane />
        <VerticalRuler />
        <DocumentArea />
      </div>
      <StatusBar />
      <Overlays />
    </div>
  );
}
